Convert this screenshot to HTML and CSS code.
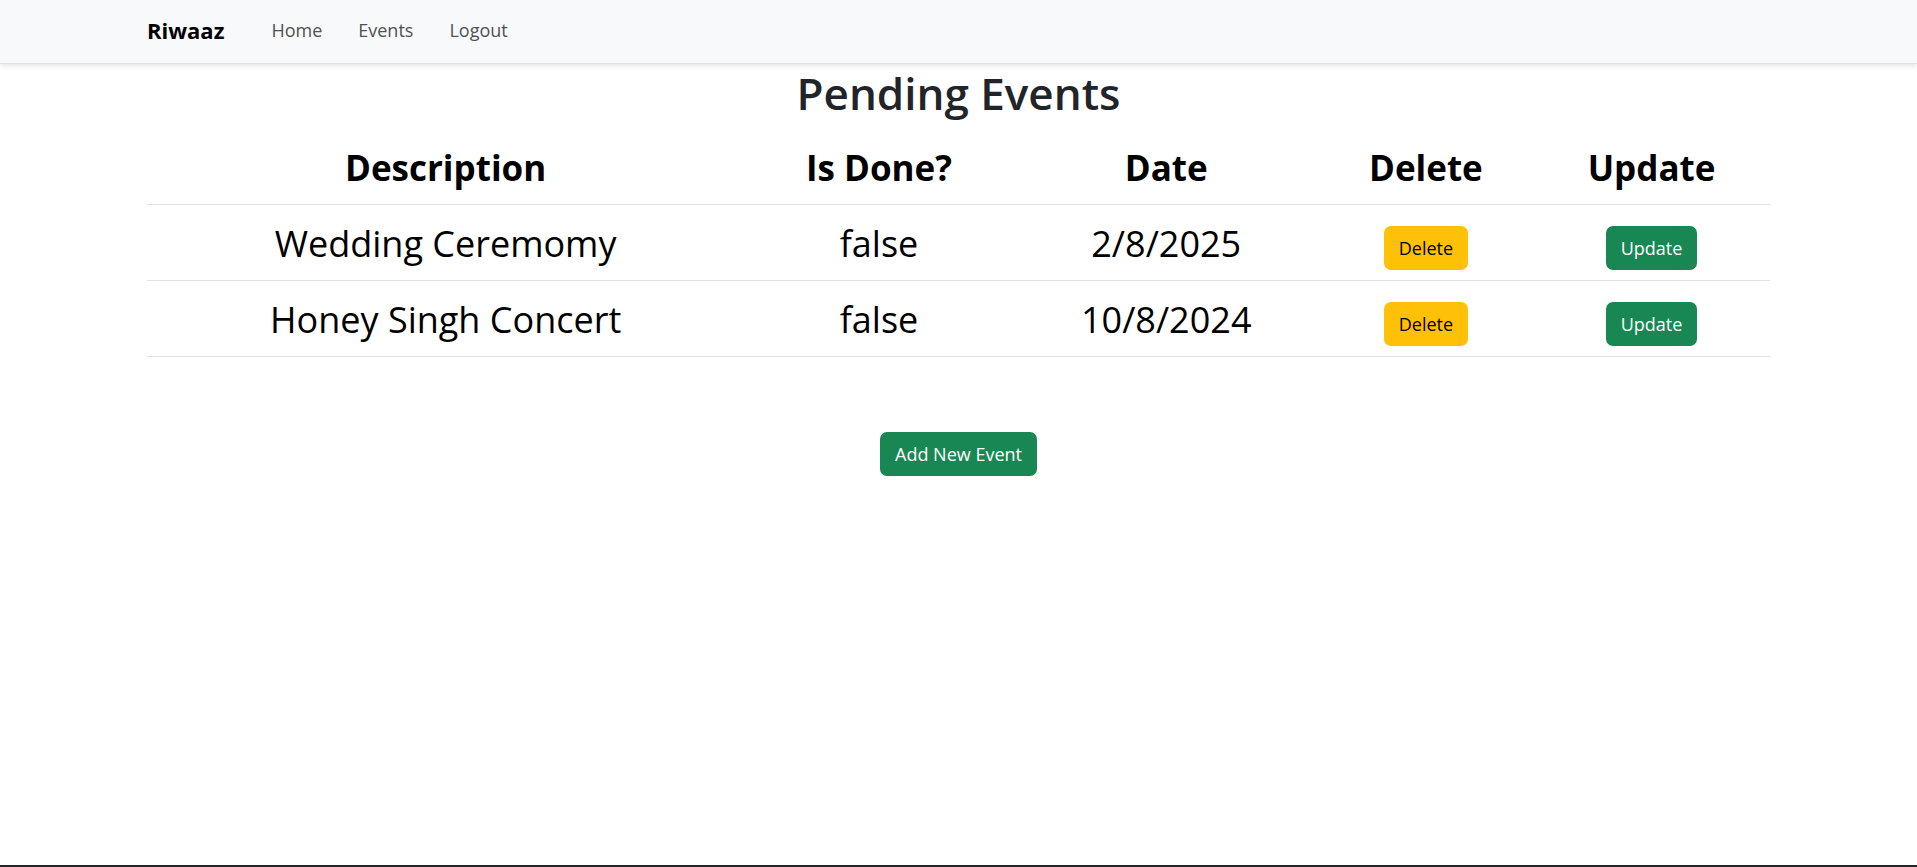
FILE: index.html
```html
<!DOCTYPE html>
<html lang="en">
<head>
<meta charset="utf-8">
<meta name="viewport" content="width=device-width, initial-scale=1">
<title>Riwaaz</title>
<link rel="stylesheet" href="styles.css">
</head>
<body>
<header class="navbar">
  <nav class="container nav-inner">
    <a class="brand" href="#">Riwaaz</a>
    <ul class="nav-list">
      <li><a class="nav-link" href="#">Home</a></li>
      <li><a class="nav-link" href="#">Events</a></li>
      <li><a class="nav-link" href="#">Logout</a></li>
    </ul>
  </nav>
</header>
<main class="container main">
  <h1 class="title">Pending Events</h1>
  <table class="table">
    <colgroup>
      <col class="col-description"><col class="col-done"><col class="col-date"><col class="col-delete"><col class="col-update">
    </colgroup>
    <thead>
      <tr><th scope="col">Description</th><th scope="col">Is Done?</th><th scope="col">Date</th><th scope="col">Delete</th><th scope="col">Update</th></tr>
    </thead>
    <tbody>
      <tr><td>Wedding Ceremomy</td><td>false</td><td>2/8/2025</td><td class="action"><button class="btn btn-warning" type="button">Delete</button></td><td class="action"><button class="btn btn-success" type="button">Update</button></td></tr>
      <tr><td>Honey Singh Concert</td><td>false</td><td>10/8/2024</td><td class="action"><button class="btn btn-warning" type="button">Delete</button></td><td class="action"><button class="btn btn-success" type="button">Update</button></td></tr>
    </tbody>
  </table>
  <button class="btn btn-success" type="button">Add New Event</button>
</main>
<footer class="footer"></footer>
</body>
</html>
```
FILE: styles.css
```css
* {
  box-sizing: border-box;
}

body {
  margin: 0;
  min-height: 100vh;
  display: flex;
  flex-direction: column;
  background: #fff;
  color: #212529;
  font-family: "Segoe UI", "Open Sans", "Noto Sans", sans-serif;
  font-size: 18px;
  line-height: 27px;
}

.container {
  width: 100%;
  max-width: 1651px;
  margin: 0 auto;
  padding: 0 14px;
}

.navbar {
  padding: 8px 0 10px;
  background: #f8f9fa;
  border-bottom: 1px solid #dee2e6;
  box-shadow: 0 2px 5px rgba(0, 0, 0, 0.1);
}

.nav-inner {
  display: flex;
  align-items: center;
  gap: 29px;
}

.brand {
  color: #000;
  font-size: 22px;
  font-weight: 700;
  line-height: 45px;
  text-decoration: none;
}

.nav-list {
  display: flex;
  margin: 0;
  padding: 0;
  list-style: none;
}

.nav-link {
  display: block;
  padding: 8px 18px;
  color: #4d5154;
  text-decoration: none;
}

.main {
  flex: 1;
  text-align: center;
}

.title {
  margin: 0 0 9px;
  font-size: 44px;
  font-weight: 600;
  line-height: 58px;
}

.table {
  width: 100%;
  margin-bottom: 75px;
  border-collapse: collapse;
  table-layout: fixed;
  color: #000;
  font-size: 36px;
  line-height: 57px;
}

.table th,
.table td {
  padding: 9px;
  border-bottom: 1px solid #dee2e6;
}

.table th {
  font-size: 35px;
  font-weight: 700;
  line-height: 55px;
}

.table td {
  padding: 10px 9px 8px;
}

.table .action {
  padding: 21px 9px 10px;
  line-height: 0;
}

.col-description { width: 36.8%; }
.col-done { width: 16.6%; }
.col-date { width: 18.8%; }
.col-delete { width: 13.2%; }
.col-update { width: 14.6%; }

.btn {
  padding: 7px 14px;
  border: 1px solid transparent;
  border-radius: 7px;
  font: inherit;
  font-size: 18px;
  line-height: 28px;
  cursor: pointer;
}

.btn-warning {
  background: #ffc107;
  color: #000;
}

.btn-success {
  background: #198754;
  color: #fff;
}

.footer {
  height: 2px;
  background: #212529;
}
```
